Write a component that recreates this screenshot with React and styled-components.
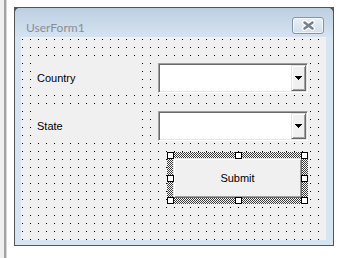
import React from 'react';
import styled, { createGlobalStyle } from 'styled-components';

const GlobalStyle = createGlobalStyle`
  html, body {
    margin: 0;
    padding: 0;
    background: #fff;
  }
  body {
    width: 343px;
    height: 258px;
    overflow: hidden;
  }
`;

const Screen = styled.div`
  display: flex;
  align-items: flex-start;
  width: 343px;
  height: 258px;
  background: #fff;
`;

const SideStrip = styled.div`
  width: 4px;
  height: 258px;
  background: #f0f0f0;
  border-right: 2px solid #a4a4a4;
  box-shadow: 1px 0 0 #d4d4d4;
`;

const Window = styled.div`
  margin: 7px 0 0 8px;
  width: 320px;
  height: 239px;
  box-sizing: border-box;
  border: 1px solid #555;
  background: #555;
  display: flex;
`;

const Frame = styled.div`
  flex: 1;
  display: flex;
  flex-direction: column;
  background: #d7e4f2;
  border-radius: 5px 5px 0 0;
`;

const TitleBar = styled.div`
  height: 29px;
  display: flex;
  justify-content: space-between;
  align-items: flex-start;
  padding: 0 9px 0 11px;
  background: linear-gradient(#bccfe2, #d5e3f1);
  border-radius: 5px 5px 0 0;
`;

const Title = styled.span`
  margin-top: 12px;
  font-family: Lato, "Open Sans", sans-serif;
  font-size: 12px;
  color: #8a8e94;
`;

const CloseButton = styled.div`
  margin-top: 9px;
  width: 32px;
  height: 17px;
  box-sizing: border-box;
  border: 1px solid #8395ad;
  border-radius: 3px;
  background: linear-gradient(#e9eff6, #d3deeb);
  box-shadow: inset 0 0 0 1px rgba(255, 255, 255, 0.6);
  display: flex;
  align-items: center;
  justify-content: center;
`;

const Client = styled.div`
  position: relative;
  margin: 0 7px 5px 6px;
  flex: 1;
  background: #f0f0f0;
  padding: 26px 0 0 12px;

  &::before {
    content: '';
    position: absolute;
    inset: 0;
    background: linear-gradient(to right, #000 1px, transparent 1px) 1px 0 / 8px 8px;
    -webkit-mask: linear-gradient(to bottom, #000 1px, transparent 1px) 0 2px / 8px 8px;
    mask: linear-gradient(to bottom, #000 1px, transparent 1px) 0 2px / 8px 8px;
  }
`;

const Form = styled.div`
  position: relative;
  z-index: 1;
  display: flex;
  flex-direction: column;
`;

const FieldRow = styled.div`
  display: flex;
  gap: 17px;
  height: 30px;
  margin-top: ${p => p.$offset || 0}px;
`;

const Label = styled.div`
  width: 108px;
  display: flex;
  align-items: center;
  padding-left: 4px;
  box-sizing: border-box;
  background: #f0f0f0;
  font-family: "Liberation Sans", Arial, sans-serif;
  font-size: 11px;
  color: #000;
`;

const Combo = styled.div`
  width: 150px;
  box-sizing: border-box;
  background: #fff;
  border: 1px solid;
  border-color: #a0a0a0 #fff #fff #a0a0a0;
  box-shadow: inset 1px 1px 0 #696969, inset -1px -1px 0 #e3e3e3;
  display: flex;
  justify-content: flex-end;
  padding: 1px;
`;

const DropButton = styled.div`
  width: 15px;
  box-sizing: border-box;
  background: #f0f0f0;
  border: 1px solid;
  border-color: #e3e3e3 #696969 #696969 #e3e3e3;
  box-shadow: inset 1px 1px 0 #fff, inset -1px -1px 0 #a0a0a0;
  display: flex;
  align-items: center;
  justify-content: center;
`;

const ActionRow = styled.div`
  margin-top: 11px;
  padding-left: 134px;
  display: flex;
`;

const Selection = styled.div`
  position: relative;
  padding: 6px;
  background: repeating-conic-gradient(#3a3a3a 0 25%, #f8f8f8 0 50%) 0 0 / 2px 2px;
`;

const Handle = styled.span`
  position: absolute;
  width: 7px;
  height: 7px;
  box-sizing: border-box;
  background: #fff;
  border: 1px solid #000;
  left: ${p => (p.$x === 'l' ? '0' : p.$x === 'c' ? 'calc(50% - 3px)' : 'auto')};
  right: ${p => (p.$x === 'r' ? '0' : 'auto')};
  top: ${p => (p.$y === 't' ? '0' : p.$y === 'm' ? 'calc(50% - 3px)' : 'auto')};
  bottom: ${p => (p.$y === 'b' ? '0' : 'auto')};
`;

const SubmitButton = styled.div`
  width: 129px;
  height: 40px;
  box-sizing: border-box;
  background: #f0f0f0;
  border: 1px solid;
  border-color: #e3e3e3 #696969 #696969 #e3e3e3;
  box-shadow: inset 1px 1px 0 #fff, inset -1px -1px 0 #a0a0a0;
  display: flex;
  align-items: center;
  justify-content: center;
  font-family: "Liberation Sans", Arial, sans-serif;
  font-size: 11px;
  color: #000;
`;

const Arrow = () => (
  <svg width="7" height="4" viewBox="0 0 7 4">
    <path d="M0 0h7v1H0z M1 1h5v1H1z M2 2h3v1H2z M3 3h1v1H3z" fill="#000" />
  </svg>
);

const CloseGlyph = () => (
  <svg width="15" height="11" viewBox="0 0 15 11">
    <path d="M3.5 2.5 L11.5 8.5 M11.5 2.5 L3.5 8.5" stroke="#fff" strokeWidth="5" strokeLinecap="round" />
    <path d="M3.5 2.5 L11.5 8.5 M11.5 2.5 L3.5 8.5" stroke="#77808b" strokeWidth="2.6" strokeLinecap="round" />
  </svg>
);

const handles = [
  ['l', 't'], ['c', 't'], ['r', 't'],
  ['l', 'm'], ['r', 'm'],
  ['l', 'b'], ['c', 'b'], ['r', 'b'],
];

export default function App() {
  return (
    <Screen>
      <GlobalStyle />
      <SideStrip />
      <Window>
        <Frame>
          <TitleBar>
            <Title>UserForm1</Title>
            <CloseButton><CloseGlyph /></CloseButton>
          </TitleBar>
          <Client>
            <Form>
              <FieldRow>
                <Label>Country</Label>
                <Combo><DropButton><Arrow /></DropButton></Combo>
              </FieldRow>
              <FieldRow $offset={18}>
                <Label>State</Label>
                <Combo><DropButton><Arrow /></DropButton></Combo>
              </FieldRow>
              <ActionRow>
                <Selection>
                  {handles.map(([x, y]) => <Handle key={x + y} $x={x} $y={y} />)}
                  <SubmitButton>Submit</SubmitButton>
                </Selection>
              </ActionRow>
            </Form>
          </Client>
        </Frame>
      </Window>
    </Screen>
  );
}
